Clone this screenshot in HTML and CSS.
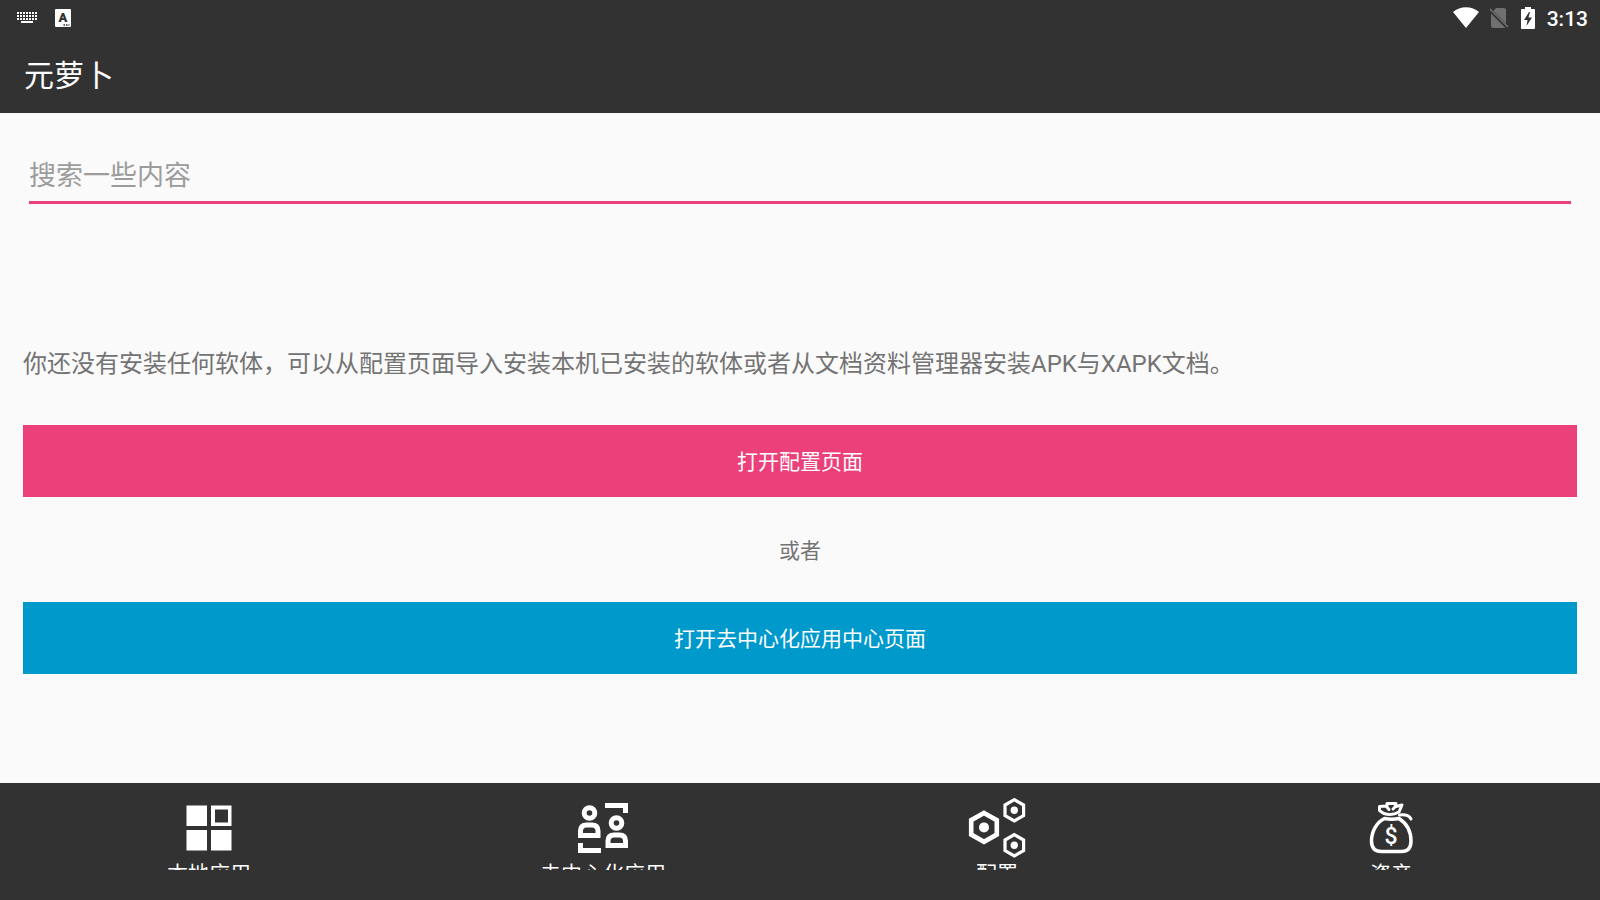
FILE: index.html
```html
<!DOCTYPE html>
<html lang="zh-CN">
<head>
  <meta charset="UTF-8">
  <meta name="viewport" content="width=device-width, initial-scale=1.0">
  <title>元萝卜</title>
  <link rel="stylesheet" href="styles.css">
</head>
<body>
  <header>
    <div class="status-bar">
      <svg class="keyboard" width="20" height="12" viewBox="0 0 20 12" fill="none" stroke="#fff" stroke-width="2">
        <path d="M0 1h20M0 4h20M0 7h20" stroke-dasharray="2 1"/>
        <path d="M4 10h12"/>
      </svg>
      <svg class="input-lang" width="16" height="18" viewBox="0 0 16 18">
        <rect width="16" height="18" rx="1" fill="#fff"/>
        <text x="8" y="13" text-anchor="middle">A</text>
        <path d="M8.500 16h6" stroke="#323232" stroke-width="1.500" stroke-dasharray="1.500 1"/>
      </svg>
      <div class="status-right">
        <svg width="26" height="22" viewBox="0 0 26 22">
          <path d="M0 5C7-1.500 19-1.500 26 5L13 21z" fill="#fff"/>
        </svg>
        <svg width="20" height="22" viewBox="0 0 20 22">
          <path d="M7 1h8a2 2 0 0 1 2 2v13.500L4.500 4zM2 6.500L16.500 21H4a2 2 0 0 1-2-2z" fill="#707070"/>
          <path d="M1 2l18 18" stroke="#707070" stroke-width="1.600"/>
        </svg>
        <svg width="14" height="22" viewBox="0 0 14 22">
          <path d="M4 0h6v2h3a1 1 0 0 1 1 1v18a1 1 0 0 1-1 1H1a1 1 0 0 1-1-1V3a1 1 0 0 1 1-1h3z" fill="#fff"/>
          <path d="M8 5L3 13h3.500L5.500 19 11 10.500H7.500L9 5z" fill="#323232"/>
        </svg>
        <span class="clock">3:13</span>
      </div>
    </div>
    <h1>元萝卜</h1>
  </header>

  <main>
    <input class="search" type="text" placeholder="搜索一些内容" aria-label="搜索一些内容">
    <p class="message">你还没有安装任何软体，可以从配置页面导入安装本机已安装的软体或者从文档资料管理器安装APK与XAPK文档。</p>
    <button class="btn pink">打开配置页面</button>
    <p class="or">或者</p>
    <button class="btn blue">打开去中心化应用中心页面</button>
  </main>

  <nav>
    <a href="#local">
      <svg width="60" height="60" viewBox="0 0 60 60" fill="#fff">
        <path d="M7.500 7.500h20.500v20.500H7.500zM7.500 32h20.500v20.500H7.500zM32 32h20.500v20.500H32z"/>
        <path fill-rule="evenodd" d="M32 7.500h20.500v20.500H32zM36 11.500v13h13V11.500z"/>
      </svg>
      <span>本地应用</span>
    </a>
    <a href="#dapp">
      <svg width="60" height="60" viewBox="0 0 60 60" fill="none" stroke="#fff" stroke-width="5">
        <circle cx="16.500" cy="15" r="5.300"/>
        <path d="M7.500 37.500V33q0-6 6-6H19q6 0 6 6v4.500z"/>
        <path d="M7.500 45v7.500H28"/>
        <circle cx="43.500" cy="25" r="5.300"/>
        <path d="M35 47.500V43q0-6 6-6h5.500q6 0 6 6v4.500z"/>
        <path d="M32 7.500h20.500V15"/>
      </svg>
      <span>去中心化应用</span>
    </a>
    <a href="#config">
      <svg width="60" height="60" viewBox="0 0 60 60" fill="none" stroke="#fff">
        <path d="M17 15l12.800 7.200v14.400L17 43.800 4.200 36.600V22.200z" stroke-width="4.600"/>
        <circle cx="17" cy="29.400" r="5" fill="#fff" stroke="none"/>
        <path d="M47.300 1.700l9.300 5.300v10.600l-9.300 5.300L38 17.600V7z" stroke-width="3.200"/>
        <circle cx="47.300" cy="12.300" r="3.700" fill="#fff" stroke="none"/>
        <path d="M47.300 36.700l9.300 5.300v10.600l-9.300 5.300L38 52.600V42z" stroke-width="3.200"/>
        <circle cx="47.300" cy="47.300" r="3.700" fill="#fff" stroke="none"/>
      </svg>
      <span>配置</span>
    </a>
    <a href="#assets">
      <svg class="money" width="60" height="60" viewBox="0 0 60 60" fill="none" stroke="#fff" stroke-width="3.500" stroke-linejoin="round" stroke-linecap="round">
        <path d="M23.500 20.500C16 24 10.500 33 10.500 43c0 7 3 10.500 10 10.500h20c6.500 0 9.500-3.500 9.500-10.500 0-10-5-18-12-22.500q-7 1.500-14.500 0z"/>
        <path d="M22 15L18.500 12.500V8.500l6.500-.5 3 3.500M26 8V5.500h9L34 9l-2 2M35 8.500l6-1.500-3 7q-7 4-15 1.500" stroke-width="3"/>
        <path d="M38.500 17q9-1 11.500 4" stroke-width="3"/>
        <text x="30" y="46" text-anchor="middle">$</text>
      </svg>
      <span>资产</span>
    </a>
  </nav>
</body>
</html>
```
FILE: styles.css
```css
:root {
  --bar: #323232;
  --bg: #fafafa;
  --pink: #ec407a;
  --blue: #0099cc;
  --text: #737373;
}
* {
  box-sizing: border-box;
}
body {
  margin: 0;
  min-height: 100vh;
  display: flex;
  flex-direction: column;
  background: var(--bg);
  color: var(--text);
  font-family: Roboto, "Noto Sans CJK SC", sans-serif;
}
header {
  background: var(--bar);
  color: #fff;
}
.status-bar {
  display: flex;
  align-items: center;
  height: 36px;
  padding: 0 12px 0 17px;
}
.input-lang {
  margin-left: 18px;
}
.input-lang text {
  font-size: 13px;
  font-weight: 900;
  fill: var(--bar);
}
.status-right {
  display: flex;
  align-items: center;
  gap: 12px;
  margin-left: auto;
}
.status-right svg:first-child {
  margin-right: -2px;
}
.clock {
  padding-top: 2px;
  font-size: 21px;
  font-weight: 500;
  line-height: 34px;
}
h1 {
  margin: 0;
  padding: 2px 24px 0;
  font-size: 30px;
  font-weight: 400;
  line-height: 75px;
}
main {
  flex: 1;
  display: flex;
  flex-direction: column;
  padding: 32px 23px;
}
.search {
  margin: 0 6px;
  padding: 11px 0 5px;
  border: none;
  border-bottom: 3px solid var(--pink);
  outline: none;
  background: none;
  font-family: inherit;
  font-size: 27px;
  line-height: 40px;
}
.search::placeholder {
  color: #9c9c9c;
}
.message {
  margin: 142px 0 43px;
  font-size: 24px;
  line-height: 36px;
}
.btn {
  padding: 22px 0 20px;
  border: none;
  color: #fff;
  font-family: inherit;
  font-size: 21px;
  line-height: 30px;
  cursor: pointer;
}
.pink {
  background: var(--pink);
}
.blue {
  background: var(--blue);
}
.or {
  margin: 0;
  padding: 39px 0 36px;
  font-size: 21px;
  line-height: 30px;
  text-align: center;
}
nav {
  display: grid;
  grid-template-columns: repeat(4, 1fr);
  padding: 15px 12px 30px;
  background: var(--bar);
}
/* labels are cut off by the fixed item height */
nav a {
  display: flex;
  flex-direction: column;
  align-items: center;
  height: 72px;
  overflow: hidden;
  color: #fff;
  font-size: 21px;
  line-height: 32px;
  text-decoration: none;
}
nav svg {
  flex-shrink: 0;
}
.money text {
  font-size: 23px;
  font-weight: 500;
  fill: #fff;
  stroke: none;
}
```
